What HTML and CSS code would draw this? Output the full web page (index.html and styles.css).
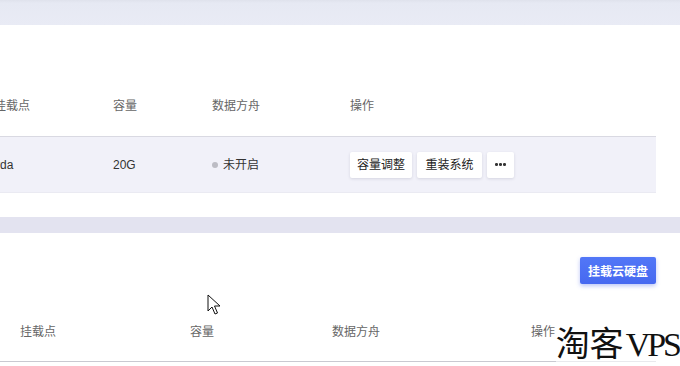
FILE: index.html
```html
<!DOCTYPE html>
<html lang="zh-CN">
<head>
<meta charset="utf-8">
<link rel="stylesheet" href="styles.css">
</head>
<body>
<div class="page">
  <div class="band band-top"></div>
  <section class="panel panel-1">
    <div class="table t1">
      <div class="thead">
        <div class="c c1">挂载点</div>
        <div class="c c2">容量</div>
        <div class="c c3">数据方舟</div>
        <div class="c c4">操作</div>
      </div>
      <div class="trow">
        <div class="c c1">vda</div>
        <div class="c c2">20G</div>
        <div class="c c3"><span class="dot"></span>未开启</div>
        <div class="c c4 ops">
          <button class="btn">容量调整</button>
          <button class="btn">重装系统</button>
          <button class="btn more" aria-label="更多"><span class="pip"></span><span class="pip"></span><span class="pip"></span></button>
        </div>
      </div>
    </div>
  </section>
  <div class="band band-mid"></div>
  <section class="panel panel-2">
    <div class="toolbar"><button class="primary">挂载云硬盘</button></div>
    <div class="table t2">
      <div class="thead">
        <div class="c d1">挂载点</div>
        <div class="c d2">容量</div>
        <div class="c d3">数据方舟</div>
        <div class="c d4">操作</div>
      </div>
    </div>
  </section>
  <svg class="cursor" width="14" height="22" viewBox="0 0 14 22"><path d="M1 1 L1 17 L5 13 L8 20 L10.5 19 L7.5 12 L13 12 Z" fill="#fff" stroke="#111" stroke-width="1" stroke-linejoin="round"/></svg>
  <div class="watermark">淘客<span class="wm-latin">VPS</span></div>
</div>
</body>
</html>
```

FILE: styles.css
```css
* { box-sizing: border-box; }
html, body { margin: 0; padding: 0; }
body {
  width: 680px;
  height: 366px;
  overflow: hidden;
  background: #fff;
  font-family: "Liberation Sans", "Noto Sans CJK SC", sans-serif;
  font-size: 12px;
  color: #333;
}
.page { position: relative; width: 680px; height: 366px; overflow: hidden; }
.band-top {
  height: 25px;
  background: linear-gradient(#dfe2ec 0, #e6e9f3 3px, #e9ebf5 100%);
}
.band-mid { height: 16px; background: #e3e3f0; }
.panel { background: #fff; }
.panel-1 { height: 192px; padding-top: 73px; overflow: hidden; }
.table { width: 656px; }
.thead {
  display: flex;
  align-items: center;
  line-height: 16px;
  color: #666;
  border-bottom: 1px solid #d9d9e2;
}
.t1 .thead { padding-bottom: 22px; }
.trow {
  display: flex;
  align-items: center;
  height: 56px;
  background: #f1f1f9;
  border-bottom: 1px solid #eaeaf2;
  line-height: 16px;
}
.t1 .c:first-child { margin-left: -6px; }
.c1 { width: 119px; }
.c2 { width: 99px; }
.c3 { width: 138px; display: flex; align-items: center; }
.c4 { flex: 1; }
.dot {
  width: 6px; height: 6px; border-radius: 50%;
  background: #bcbcc4; margin-right: 5px;
}
.ops { display: flex; gap: 5px; }
.btn {
  font: inherit;
  color: #222;
  height: 26px;
  padding: 0 7px;
  min-width: 62px;
  background: #fff;
  border: none;
  border-radius: 2px;
  box-shadow: 0 1px 3px rgba(40, 40, 80, 0.14);
  line-height: 26px;
}
.ops .btn:nth-child(2) { min-width: 65px; }
.btn.more {
  min-width: 27px;
  width: 27px;
  padding: 0;
  display: flex;
  align-items: center;
  justify-content: center;
  gap: 1.5px;
}
.pip { width: 2.5px; height: 2.5px; border-radius: 50%; background: #333; }
.panel-2 { height: 133px; padding-top: 24px; }
.toolbar { width: 656px; display: flex; justify-content: flex-end; }
.primary {
  font: inherit;
  font-weight: bold;
  color: #fff;
  height: 27px;
  width: 76px;
  padding: 0;
  border: none;
  border-radius: 2px;
  background: linear-gradient(#5277f7, #4668f0);
  box-shadow: 0 2px 4px rgba(60, 90, 230, 0.35);
}
.t2 { margin-top: 40px; }
.t2 .thead { padding-bottom: 21px; border-bottom-color: #c9c9d1; }
.d1 { width: 190px; padding-left: 20px; }
.d2 { width: 142px; }
.d3 { width: 199px; }
.d4 { flex: 1; }
.cursor { position: absolute; left: 207px; top: 294px; }
.watermark {
  position: absolute;
  right: 1px;
  bottom: 2px;
  font-family: "Liberation Serif", "Noto Sans CJK SC", serif;
  font-size: 34px;
  line-height: 38px;
  color: #111;
  background: rgba(255,255,255,0.6);
}
.wm-latin { letter-spacing: -3px; padding-left: 2px; }
```
